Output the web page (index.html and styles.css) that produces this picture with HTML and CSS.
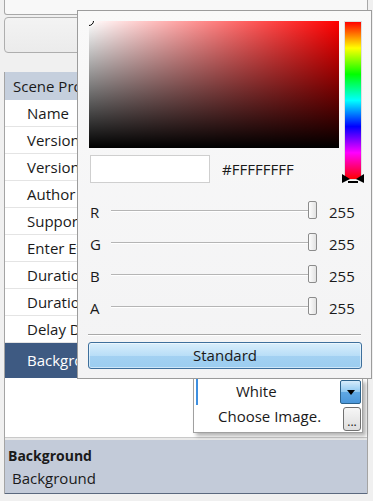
FILE: index.html
```html
<!DOCTYPE html>
<html>
<head>
<meta charset="utf-8">
<link rel="stylesheet" href="styles.css">
</head>
<body>
<div class="page">
  <div class="topbox"></div>
  <div class="btnbox"></div>
  <div class="grid">
    <div class="cat">Scene Properties</div>
    <div class="row">Name</div>
    <div class="row">Version</div>
    <div class="row">Version Code</div>
    <div class="row">Author</div>
    <div class="row">Support</div>
    <div class="row">Enter Effect</div>
    <div class="row">Duration</div>
    <div class="row">Duration Effect</div>
    <div class="row">Delay Duration</div>
    <div class="row sel">Background</div>
    <div class="empty"></div>
    <div class="gapbar"></div>
    <div class="desc">
      <div class="dt">Background</div>
      <div class="dd">Background</div>
    </div>
  </div>
</div>

<div class="popup">
  <div class="pick">
    <div class="leftcol">
      <div class="sv"><span class="ring"></span></div>
      <div class="swrow">
        <div class="swatch"></div>
        <span class="hex">#FFFFFFFF</span>
      </div>
    </div>
    <div class="hue">
      <svg class="huemark" width="22" height="9" viewBox="0 0 22 9">
        <path d="M0 0 L8 5 L0 9 Z M22 0 L14 5 L22 9 Z" fill="#000"/>
        <rect x="6" y="7" width="10" height="2" fill="#000"/>
      </svg>
    </div>
  </div>
  <div class="sliders">
    <div class="srow"><span class="lbl">R</span><div class="track"><span class="thumb"></span></div><span class="val">255</span></div>
    <div class="srow"><span class="lbl">G</span><div class="track"><span class="thumb"></span></div><span class="val">255</span></div>
    <div class="srow"><span class="lbl">B</span><div class="track"><span class="thumb"></span></div><span class="val">255</span></div>
    <div class="srow"><span class="lbl">A</span><div class="track"><span class="thumb"></span></div><span class="val">255</span></div>
  </div>
  <div class="sep"></div>
  <div class="stdbtn">Standard</div>
</div>

<div class="dropdown">
  <div class="bluebar"></div>
  <div class="item white">White</div>
  <div class="item choose">Choose Image.</div>
  <div class="arrowbtn"><svg width="8" height="5" viewBox="0 0 8 5"><path d="M0 0 H8 L4 5 Z" fill="#000"/></svg></div>
  <div class="dotbtn">...</div>
</div>
</body>
</html>
```
FILE: styles.css
```css
html, body {
  margin: 0;
  padding: 0;
}
body {
  width: 373px;
  height: 501px;
  overflow: hidden;
  background: #f0f0f0;
  font-family: "Open Sans", "Noto Sans", sans-serif;
  font-size: 15px;
  color: #1a1a1a;
  position: relative;
}
.page {
  padding: 0 5px 0 4px;
}
.topbox {
  height: 14px;
  background: #f8f8f8;
  border: 1px solid #a8a8a8;
  border-top: none;
  border-radius: 0 0 3px 3px;
}
.btnbox {
  margin-top: 2px;
  height: 34px;
  border: 1px solid #aeaeae;
  border-radius: 4px;
  background: linear-gradient(#f3f3f3, #ebebeb);
}
.grid {
  margin-top: 19px;
  border-left: 1px solid #a4a4a4;
  border-right: 1px solid #a4a4a4;
  background: #fff;
}
.cat {
  height: 28px;
  line-height: 28px;
  padding-left: 8px;
  background: #c5cfdd;
  white-space: nowrap;
  overflow: hidden;
}
.row {
  height: 26px;
  line-height: 26px;
  border-bottom: 1px solid #e4e4e4;
  padding-left: 22px;
  white-space: nowrap;
  overflow: hidden;
}
.row.sel {
  height: 35px;
  line-height: 35px;
  border-bottom: none;
  background: #3e5a82;
  color: #fff;
}
.empty {
  height: 59px;
  border-bottom: 1px solid #c9c9c9;
}
.gapbar {
  height: 2px;
  background: #e9e9e9;
}
.desc {
  height: 53px;
  background: #c3cbd9;
  border-bottom: 1px solid #5a687e;
  padding-left: 3px;
}
.dt {
  font-weight: bold;
  font-size: 14px;
  height: 26px;
  line-height: 32px;
}
.dd {
  padding-left: 4px;
  line-height: 24px;
}

/* popup colour picker */
.popup {
  position: absolute;
  left: 77px;
  top: 10px;
  width: 295px;
  height: 369px;
  box-sizing: border-box;
  border: 1px solid #9c9c9c;
  background: linear-gradient(#f9f9f9, #f3f3f4);
  padding: 10px 9px 0 10px;
}
.pick {
  display: flex;
  gap: 5px;
}
.leftcol {
  margin-left: 1px;
  width: 250px;
}
.sv {
  position: relative;
  height: 127px;
  overflow: hidden;
  background: linear-gradient(to top, #000, rgba(0,0,0,0)), linear-gradient(to right, #fff, #ff0000);
}
.ring {
  position: absolute;
  left: -5px;
  top: -5px;
  width: 8px;
  height: 8px;
  border: 1.5px solid #000;
  border-radius: 50%;
  box-shadow: 0 0 0 1px #fff;
}
.swrow {
  margin-top: 7px;
  display: flex;
  align-items: center;
  height: 28px;
}
.swatch {
  margin-left: 1px;
  width: 118px;
  height: 26px;
  background: #fff;
  border: 1px solid #cfcfcf;
}
.hex {
  margin-left: 12px;
}
.hue {
  position: relative;
  width: 18px;
  height: 159px;
  box-sizing: border-box;
  border: 1px solid #dedede;
  background: linear-gradient(#ff0000, #ffff00 16.6%, #00ff00 33.3%, #00ffff 50%, #0000ff 66.6%, #ff00ff 83.3%, #ff0000);
}
.huemark {
  position: absolute;
  left: -3px;
  bottom: -4px;
}
.sliders {
  margin-top: 13px;
}
.srow {
  height: 32px;
  display: flex;
  align-items: center;
}
.lbl {
  width: 23px;
  padding-left: 2px;
  box-sizing: border-box;
}
.track {
  position: relative;
  width: 206px;
  height: 2px;
  background: #b5b5b5;
  border-bottom: 1px solid #fff;
  box-sizing: border-box;
  margin-top: -2px;
}
.thumb {
  position: absolute;
  right: 0;
  top: -9px;
  width: 9px;
  height: 18px;
  box-sizing: border-box;
  border: 1px solid #8c8c8c;
  border-radius: 2px;
  background: linear-gradient(to right, #fdfdfd, #e2e2e2);
}
.val {
  margin-left: 12px;
}
.sep {
  margin-top: 10px;
  height: 1px;
  background: #a9a9a9;
  border-bottom: 1px solid #fff;
  margin-right: 1px;
}
.stdbtn {
  margin-top: 6px;
  height: 27px;
  box-sizing: border-box;
  border: 1px solid #3d6f9c;
  border-radius: 3px;
  background: linear-gradient(#d8eefc, #b9def7 50%, #a3d1f2 51%, #9bcdf0);
  box-shadow: inset 0 0 0 1px rgba(255,255,255,0.5);
  text-align: center;
  line-height: 25px;
}

/* dropdown */
.dropdown {
  position: absolute;
  left: 193px;
  top: 379px;
  width: 170px;
  height: 54px;
  box-sizing: border-box;
  background: #fff;
  border: 1px solid #a0a0a0;
  border-top: none;
  box-shadow: 3px 3px 4px rgba(0,0,0,0.3);
}
.bluebar {
  position: absolute;
  left: 2px;
  top: 0;
  width: 2px;
  height: 26px;
  background: #3d8fe0;
}
.item {
  height: 25px;
  line-height: 25px;
  white-space: nowrap;
}
.white {
  padding-left: 42px;
}
.choose {
  padding-left: 24px;
}
.arrowbtn {
  position: absolute;
  left: 146px;
  top: 1px;
  width: 21px;
  height: 24px;
  box-sizing: border-box;
  border: 1px solid #2c628b;
  border-radius: 2px;
  background: linear-gradient(#d6ecfb, #8ec8f1 50%, #5fa8e4 51%, #4b97da);
  display: flex;
  align-items: center;
  justify-content: center;
}
.dotbtn {
  position: absolute;
  left: 149px;
  top: 28px;
  width: 18px;
  height: 24px;
  box-sizing: border-box;
  border: 1px solid #707070;
  border-radius: 3px;
  background: linear-gradient(#f6f6f6, #dddddd);
  font-size: 12px;
  line-height: 28px;
  text-align: center;
  overflow: hidden;
}
```
